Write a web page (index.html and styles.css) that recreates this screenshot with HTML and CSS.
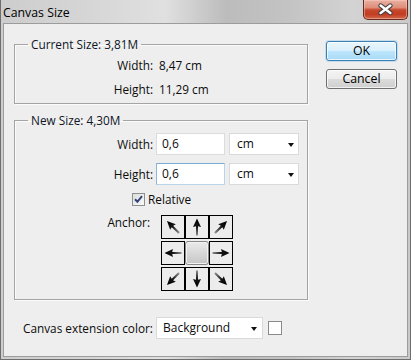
FILE: index.html
```html
<!DOCTYPE html>
<html>
<head>
<meta charset="utf-8">
<link rel="stylesheet" href="styles.css">
</head>
<body>
<svg class="defs" width="0" height="0">
  <defs>
    <linearGradient id="ag" x1="0" y1="3" x2="0" y2="19" gradientUnits="userSpaceOnUse">
      <stop offset="0" stop-color="#000"/>
      <stop offset="0.5" stop-color="#151515"/>
      <stop offset="1" stop-color="#8a8a8a"/>
    </linearGradient>
    <symbol id="arrow" viewBox="0 0 22 22">
      <path d="M11 2.5 L15 11 L12 10.2 L12 19.5 L10 19.5 L10 10.2 L7 11 Z" fill="url(#ag)"/>
    </symbol>
  </defs>
</svg>
<div class="window">
  <div class="titlebar">
    <span class="title">Canvas Size</span>
    <div class="close">
      <svg width="45" height="20" viewBox="0 0 45 20">
        <path d="M18 6.5 L28 14 M28 6.5 L18 14" stroke="#3d3d3d" stroke-width="4.6" stroke-linecap="round"/>
        <path d="M18 6.5 L28 14 M28 6.5 L18 14" stroke="#fff" stroke-width="2.6" stroke-linecap="round"/>
      </svg>
    </div>
  </div>
  <div class="client">
    <div class="main">
      <div class="groups">
        <fieldset class="group current">
          <legend>Current Size: 3,81M</legend>
          <div class="info">
            <span class="lbl">Width:</span><span class="val">8,47 cm</span>
            <span class="lbl">Height:</span><span class="val">11,29 cm</span>
          </div>
        </fieldset>
        <fieldset class="group newsize">
          <legend>New Size: 4,30M</legend>
          <div class="form">
            <span class="lbl">Width:</span>
            <div class="input">0,6</div>
            <div class="select unit"><span>cm</span><i class="caret"></i></div>
            <span class="lbl">Height:</span>
            <div class="input focus">0,6</div>
            <div class="select unit"><span>cm</span><i class="caret"></i></div>
          </div>
          <div class="check-row">
            <span class="checkbox">
              <svg width="13" height="13" viewBox="0 0 13 13">
                <path d="M3 6.3 L5.4 8.8 L10 3.2" fill="none" stroke="#2f4478" stroke-width="2"/>
              </svg>
            </span>
            <span class="check-label">Relative</span>
          </div>
          <div class="anchor-row">
            <span class="lbl anchor-lbl">Anchor:</span>
            <div class="anchor">
              <div class="cell"><svg width="22" height="22"><use href="#arrow" transform="rotate(315 11 11)"/></svg></div>
              <div class="cell"><svg width="22" height="22"><use href="#arrow"/></svg></div>
              <div class="cell"><svg width="22" height="22"><use href="#arrow" transform="rotate(45 11 11)"/></svg></div>
              <div class="cell"><svg width="22" height="22"><use href="#arrow" transform="rotate(270 11 11)"/></svg></div>
              <div class="cell center"></div>
              <div class="cell"><svg width="22" height="22"><use href="#arrow" transform="rotate(90 11 11)"/></svg></div>
              <div class="cell"><svg width="22" height="22"><use href="#arrow" transform="rotate(225 11 11)"/></svg></div>
              <div class="cell"><svg width="22" height="22"><use href="#arrow" transform="rotate(180 11 11)"/></svg></div>
              <div class="cell"><svg width="22" height="22"><use href="#arrow" transform="rotate(135 11 11)"/></svg></div>
            </div>
          </div>
        </fieldset>
      </div>
      <div class="buttons">
        <button class="btn default">OK</button>
        <button class="btn">Cancel</button>
      </div>
    </div>
    <div class="footer">
      <span class="footer-lbl">Canvas extension color:</span>
      <div class="select bg"><span>Background</span><i class="caret"></i></div>
      <span class="swatch"></span>
    </div>
  </div>
</div>
</body>
</html>
```

FILE: styles.css
```css
* { box-sizing: border-box; }
html, body { margin: 0; padding: 0; }
body {
  width: 411px;
  height: 360px;
  font-family: "Open Sans", "DejaVu Sans", sans-serif;
  font-size: 11.8px;
  color: #0c0c0c;
  background: #fff;
  overflow: hidden;
}
.defs { position: absolute; width: 0; height: 0; }

.window {
  width: 411px;
  height: 360px;
  display: flex;
  flex-direction: column;
  border: 1px solid #6e6e6e;
  border-top: 0;
  padding: 0 2px 2px 2px;
  background: linear-gradient(90deg, #cdcdcd 0%, #d6d6d6 22%, #e0e0e0 40%, #bcbcbc 55%, #c3c3c3 70%, #d3d3d3 86%, #c9c9c9 100%);
}

.titlebar {
  height: 23px;
  display: flex;
  align-items: flex-start;
  justify-content: space-between;
}
.title {
  font-size: 12.3px;
  line-height: 16px;
  margin-top: 5px;
  color: #000;
}
.close {
  width: 45px;
  height: 20px;
  border: 1px solid #6b2a1d;
  border-top: 0;
  border-radius: 0 0 5px 5px;
  background: linear-gradient(180deg, #eab1a3 0%, #de8d78 40%, #c8482d 52%, #c13d22 75%, #d2694b 100%);
  box-shadow: inset 0 0 0 1px rgba(255, 210, 200, 0.45);
  display: flex;
}
.close svg { display: block; margin: -1px 0 0 -1px; }

.client {
  flex: 1;
  border: 1px solid #9c9c9c;
  background: #eeeeee;
  display: flex;
  flex-direction: column;
}

.main { display: flex; }
.groups {
  margin-left: 10px;
  margin-top: 13px;
  width: 294px;
  display: flex;
  flex-direction: column;
}

.group {
  margin: 0;
  padding: 0;
  min-width: 0;
  border: 1px solid #a4a4a4;
  box-shadow: 1px 1px 0 #fbfbfb, inset 1px 1px 0 #fbfbfb;
}
.group legend {
  margin-left: 13px;
  padding: 0 3px;
  line-height: 15px;
  color: #0e1526;
}
.current { padding: 1px 0 2px 0; }
.info {
  display: grid;
  grid-template-columns: 138px auto;
  column-gap: 6px;
  grid-auto-rows: 24px;
  align-items: center;
}
.lbl { text-align: right; }

.newsize { margin-top: 9px; padding: 5px 0 8px 0; }
.form {
  display: grid;
  grid-template-columns: 141px 73px 70px;
  grid-auto-rows: 22px;
  row-gap: 8px;
  align-items: center;
}
.form .lbl { padding-right: 3px; }

.input {
  width: 69px;
  height: 22px;
  background: #fff;
  border: 1px solid #dcdcdc;
  padding: 0 0 0 5px;
  line-height: 20px;
  font-size: 12px;
}
.input.focus {
  border-color: #7aaad6 #b8d3ea #b8d3ea #8fb7dd;
}
.select {
  height: 22px;
  background: #fff;
  border: 1px solid #dadada;
  display: flex;
  align-items: center;
  justify-content: space-between;
  line-height: 20px;
  font-size: 12px;
}
.unit { width: 70px; padding: 0 4px 0 7px; }
.caret {
  width: 0;
  height: 0;
  border-left: 3.5px solid transparent;
  border-right: 3.5px solid transparent;
  border-top: 4px solid #111;
  margin-top: 1px;
}

.check-row {
  display: flex;
  align-items: center;
  margin-top: 8px;
  padding-left: 117px;
  height: 13px;
}
.checkbox {
  width: 13px;
  height: 13px;
  border: 1px solid #8e8f8f;
  background: linear-gradient(135deg, #dcdcdc, #fbfbfb);
  display: flex;
}
.checkbox svg { display: block; margin: -1px; }
.check-label { margin-left: 3px; line-height: 15px; }

.anchor-row {
  display: flex;
  align-items: flex-start;
  margin-top: 9px;
}
.anchor-lbl {
  width: 135px;
  line-height: 15px;
}
.anchor {
  margin-left: 11px;
  display: grid;
  grid-template-columns: repeat(3, 24px);
  grid-auto-rows: 24px;
  row-gap: 2px;
}
.cell {
  border: 1px solid #000;
  background: #ececec;
}
.cell svg { display: block; }
.cell.center {
  border-color: #878787;
  border-radius: 3px;
  background: linear-gradient(180deg, #ebebeb 0%, #d8d8d8 50%, #c6c6c6 100%);
  box-shadow: inset 0 0 0 1px #f2f2f2;
}

.buttons {
  margin-left: 18px;
  margin-top: 17px;
  display: flex;
  flex-direction: column;
  gap: 8px;
}
.btn {
  width: 71px;
  height: 20px;
  padding: 0;
  font: inherit;
  font-size: 12.3px;
  line-height: 16px;
  color: #000;
  border: 1px solid #707070;
  border-radius: 3px;
  background: linear-gradient(180deg, #f4f4f4 0%, #ececec 49%, #dcdcdc 50%, #cfcfcf 100%);
  box-shadow: inset 0 0 0 1px rgba(255, 255, 255, 0.7);
}
.btn.default {
  border-color: #3c7fb1;
  background: linear-gradient(180deg, #eaf6fd 0%, #d9f0fc 49%, #bee6fd 50%, #a7d9f5 100%);
  box-shadow: inset 0 0 0 1px rgba(255, 255, 255, 0.75), 0 0 0 1px rgba(120, 190, 235, 0.35);
}

.footer {
  display: flex;
  align-items: center;
  margin-top: 17px;
  padding-left: 19px;
}
.footer-lbl { width: 133px; }
.bg { width: 107px; padding: 0 5px 0 6px; }
.swatch {
  width: 14px;
  height: 14px;
  margin-left: 5px;
  background: #fff;
  border: 1px solid #8a8a8a;
}
```
